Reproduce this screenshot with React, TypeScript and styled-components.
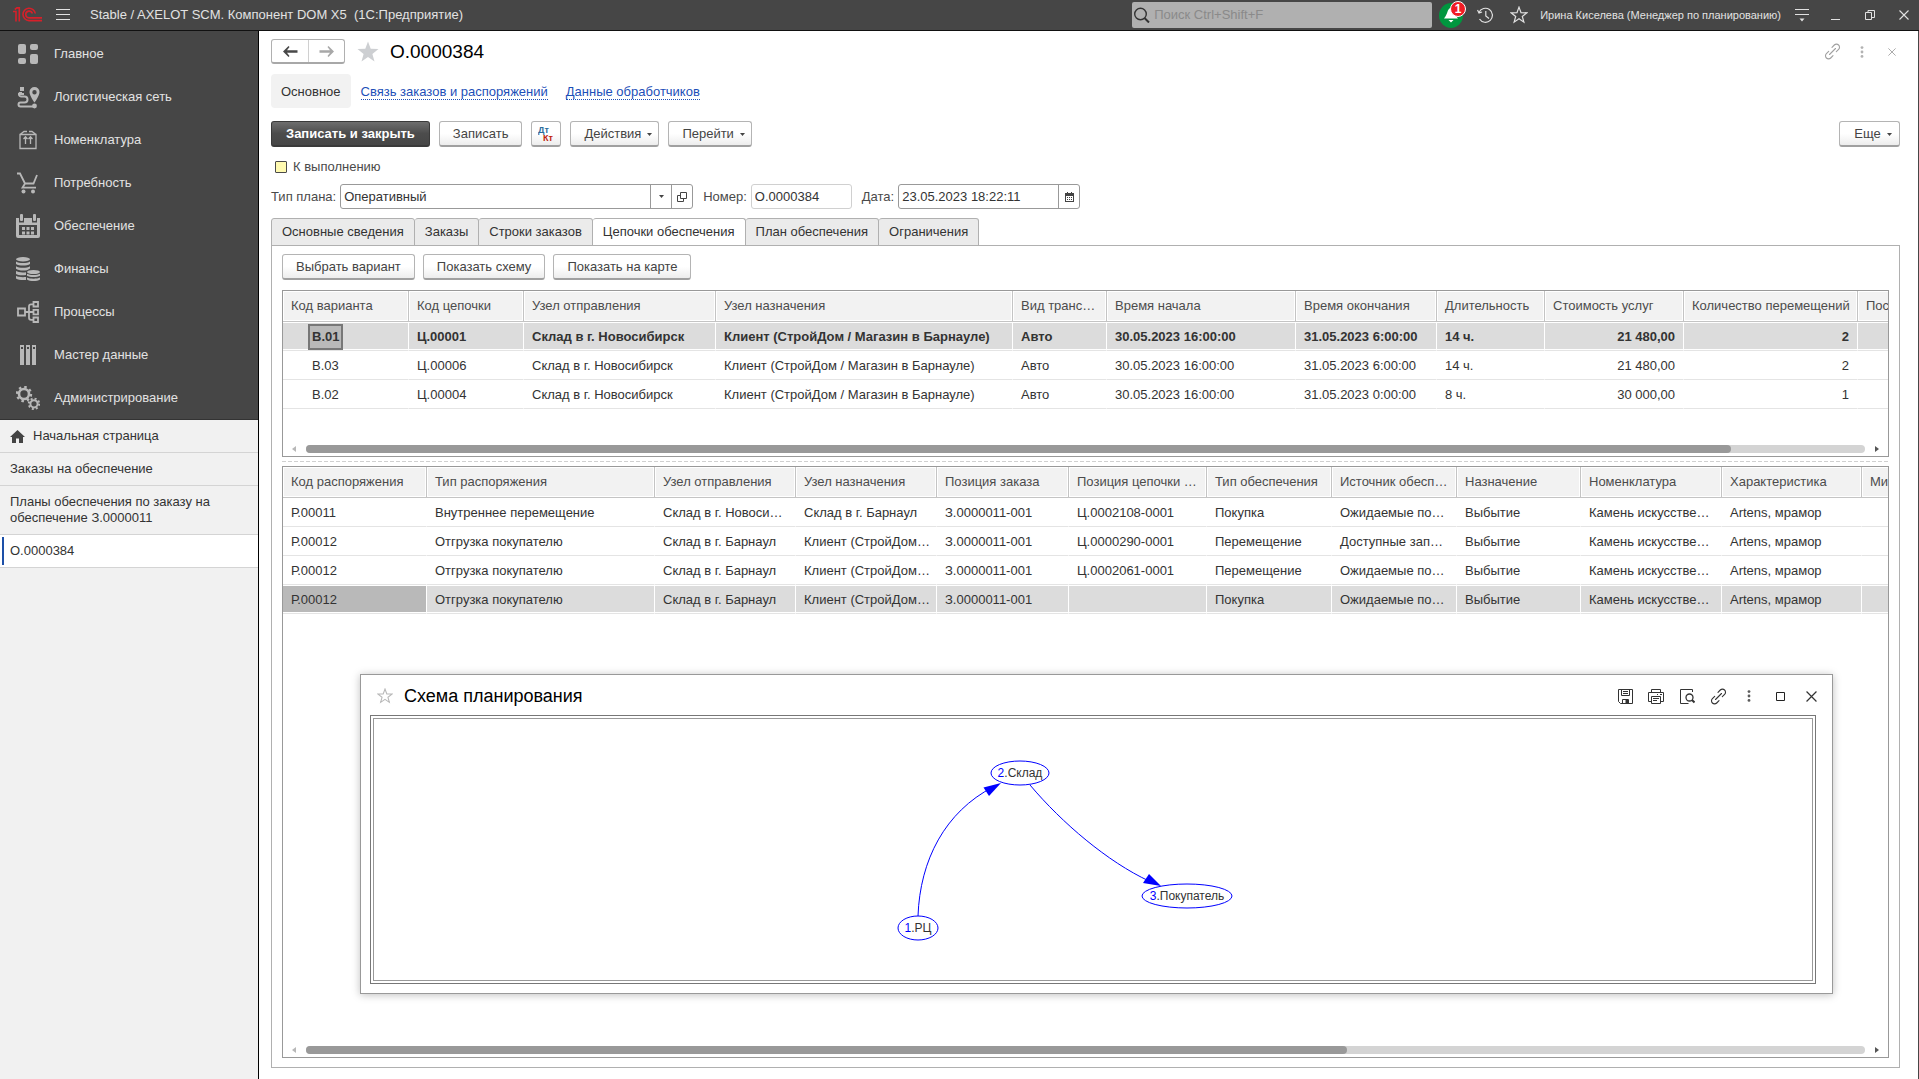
import React from "react";
import styled, { createGlobalStyle, css } from "styled-components";

const Global = createGlobalStyle`
  *, *::before, *::after { box-sizing: border-box; }
  body { margin: 0; background: #fff; }
  body, button, input, select, table {
    font-family: "Liberation Sans", Arial, sans-serif;
    font-size: 13px;
    line-height: 16px;
    color: #333;
  }
  button, input, select { margin: 0; padding: 0; border: 0; background: none; }
  button { cursor: pointer; }
  svg { display: block; flex: none; }
`;

const Shell = styled.div`
  display: flex;
  flex-direction: column;
  min-height: 100vh;
`;

/* ---------- top bar ---------- */

const TopBar = styled.header`
  display: flex;
  align-items: center;
  height: 31px;
  padding: 0 10px 0 12px;
  background: #464646;
  border-bottom: 1px solid #111;
  color: #e2e2e2;
`;
const AppTitle = styled.span`
  flex: 1;
  margin-left: 20px;
  white-space: pre;
`;
const TopButton = styled.button<{ $gap?: number }>`
  display: flex;
  align-items: center;
  justify-content: center;
  margin-left: ${(p) => p.$gap ?? 10}px;
  color: #e2e2e2;
`;
const Search = styled.label`
  display: flex;
  align-items: center;
  gap: 4px;
  width: 300px;
  height: 26px;
  padding: 0 2px;
  background: #b0b0b0;
  border-radius: 2px;
`;
const SearchInput = styled.input`
  flex: 1;
  min-width: 0;
  outline: none;
  &::placeholder { color: #8a8a8a; opacity: 1; }
`;
const Bell = styled.button`
  position: relative;
  display: flex;
  align-items: center;
  justify-content: center;
  width: 24px;
  height: 25px;
  margin-left: 7px;
  border-radius: 50%;
  background: #00963f;
`;
const Badge = styled.span`
  position: absolute;
  top: -2px;
  right: -3px;
  width: 16px;
  height: 16px;
  border: 1px solid #fff;
  border-radius: 50%;
  background: #f01c24;
  color: #fff;
  font-size: 12px;
  font-weight: bold;
  line-height: 14px;
  text-align: center;
`;
const UserName = styled.span`
  margin: 0 14px 0 12px;
  font-size: 11px;
  white-space: nowrap;
`;

/* ---------- sidebar ---------- */

const Body = styled.div`
  display: flex;
  flex: 1;
`;
const Sidebar = styled.aside`
  width: 259px;
  flex: none;
  background: #f1f1f1;
  border-right: 1px solid #000;
`;
const Sections = styled.nav`
  padding-top: 1px;
  background: #464646;
  border-bottom: 1px solid #333;
`;
const Section = styled.button`
  display: flex;
  align-items: center;
  gap: 14px;
  width: 100%;
  height: 43px;
  padding-left: 16px;
  color: #e2e2e2;
  text-align: left;
  svg { color: #b8b8b8; }
`;
const OpenWindow = styled.button<{ $active?: boolean }>`
  display: flex;
  align-items: center;
  gap: 8px;
  width: 100%;
  padding: 8px 40px 8px 10px;
  border-bottom: 1px solid #d4d4d4;
  text-align: left;
  ${(p) =>
    p.$active &&
    css`
      padding: 2px 2px;
      gap: 6px;
      background: #fff;
      &::before {
        content: "";
        width: 2px;
        height: 28px;
        background: #1d50a8;
      }
    `}
`;

/* ---------- form ---------- */

const Main = styled.main`
  display: flex;
  flex: 1;
  flex-direction: column;
  min-width: 0;
  padding: 8px 18px 11px 12px;
  border-right: 1px solid #464646;
`;
const TitleRow = styled.div`
  display: flex;
  align-items: center;
  height: 25px;
`;
const History = styled.div`
  display: flex;
  height: 25px;
  border: 1px solid #b0b0b0;
  border-bottom: 2px solid #a8a8a8;
  border-radius: 3px;
`;
const HistoryButton = styled.button`
  display: flex;
  align-items: center;
  justify-content: center;
  width: 36px;
  & + & { border-left: 1px solid #d0d0d0; }
`;
const StarButton = styled.button`
  margin: 0 10px 0 11px;
`;
const Title = styled.h1`
  flex: 1;
  margin: 0;
  font-size: 19px;
  line-height: 24px;
  font-weight: normal;
  color: #000;
`;
const FormTools = styled.div`
  display: flex;
  gap: 10px;
  margin-right: -2px;
`;
const FormTool = styled.button`
  display: flex;
  align-items: center;
  justify-content: center;
  width: 20px;
  height: 20px;
  color: #a0a0a0;
`;
const FormLinks = styled.nav`
  display: flex;
  align-items: center;
  height: 34px;
  margin-top: 10px;
`;
const CurrentLink = styled.span`
  display: flex;
  align-items: center;
  height: 34px;
  padding: 1px 10px 0;
  margin-right: 10px;
  border-radius: 4px;
  background: #f2f2f2;
`;
const FormLink = styled.a`
  margin: 2px 18px 0 0;
  border-bottom: 1px dotted #1d4fb8;
  color: #1d4fb8;
  line-height: 14px;
  text-decoration: none;
`;
const Toolbar = styled.div`
  display: flex;
  gap: 9px;
  margin-top: 13px;
`;
const Button = styled.button<{ $primary?: boolean; $tight?: boolean }>`
  display: flex;
  align-items: center;
  justify-content: center;
  gap: 6px;
  height: 26px;
  padding: 1px ${(p) => (p.$tight ? 6 : 13)}px 0;
  border: 1px solid #b4b4b4;
  border-bottom: 2px solid #a0a0a0;
  border-radius: 3px;
  background: linear-gradient(#fff 50%, #ededed);
  color: #444;
  white-space: nowrap;
  ${(p) =>
    p.$primary &&
    css`
      padding: 1px 14px 0;
      border-color: #3a3a3a;
      background: linear-gradient(#6e6e6e, #4c4c4c 50%, #464646);
      color: #fff;
      font-weight: bold;
    `}
`;
const MenuButton = styled(Button)`
  min-width: 61px;
  padding-right: 6px;
`;
const Spacer = styled.div`
  flex: 1;
`;
const CheckRow = styled.label`
  display: flex;
  align-items: center;
  gap: 6px;
  height: 16px;
  margin-top: 12px;
  padding-left: 4px;
  color: #4a4a4a;
`;
const Checkbox = styled.input`
  appearance: none;
  width: 12px;
  height: 12px;
  border: 1px solid #4a4a4a;
  border-radius: 1px;
  background: #fffab0;
`;
const Fields = styled.div`
  display: flex;
  align-items: center;
  margin-top: 9px;
`;
const FieldLabel = styled.label`
  margin-right: 4px;
  color: #4a4a4a;
`;
const FieldBox = styled.div<{ $width: number; $readOnly?: boolean }>`
  display: flex;
  width: ${(p) => p.$width}px;
  height: 25px;
  margin-right: 10px;
  border: 1px solid ${(p) => (p.$readOnly ? "#d0d0d0" : "#999")};
  border-radius: 3px;
  input, select {
    flex: 1;
    min-width: 0;
    padding: 0 3px;
    appearance: none;
    outline: none;
  }
`;
const FieldButton = styled.button`
  display: flex;
  align-items: center;
  justify-content: center;
  width: 21px;
  border-left: 1px solid #999;
  color: #444;
`;

/* ---------- tabs ---------- */

const Tabs = styled.div`
  display: flex;
  margin-top: 9px;
`;
const Tab = styled.button<{ $active?: boolean }>`
  height: 28px;
  padding: 0 10px;
  margin-bottom: -1px;
  border: 1px solid #b0b0b0;
  border-left-width: 0;
  border-radius: 3px 3px 0 0;
  background: #ebebeb;
  &:first-child { border-left-width: 1px; }
  ${(p) =>
    p.$active &&
    css`
      background: #fff;
      border-bottom-color: #fff;
    `}
`;
const Panel = styled.section`
  display: flex;
  flex: 1;
  flex-direction: column;
  padding: 8px 10px 9px;
  border: 1px solid #b0b0b0;
`;
const PanelButtons = styled.div`
  display: flex;
  gap: 8px;
  margin-bottom: 10px;
`;
const Splitter = styled.div`
  height: 1px;
  margin: 4px 0;
  background: repeating-linear-gradient(90deg, #d0d0d0 0 4px, #fff 4px 6px);
`;

/* ---------- tables ---------- */

const GridFrame = styled.div<{ $fill?: boolean }>`
  display: flex;
  flex-direction: column;
  border: 1px solid #999;
  ${(p) => (p.$fill ? "flex: 1;" : "min-height: 167px;")}
`;
const GridView = styled.div`
  flex: 1;
  overflow: hidden;
  contain: inline-size;
`;
const Table = styled.table`
  table-layout: fixed;
  width: 0;
  border-collapse: separate;
  border-spacing: 0;
`;
const Th = styled.th`
  height: 31px;
  padding: 0 2px 0 8px;
  border-right: 1px solid #c4c4c4;
  border-bottom: 1px solid #c4c4c4;
  background: #f2f2f2;
  box-shadow: inset 0 0 0 1px #fff;
  color: #4c4c4c;
  font-weight: normal;
  text-align: left;
  white-space: nowrap;
`;
const Row = styled.tr<{ $selected?: boolean; $bold?: boolean }>`
  font-weight: ${(p) => (p.$bold ? "bold" : "normal")};
  ${(p) =>
    p.$selected &&
    css`
      td {
        border-right: 1px solid #fff;
        background: #dcdcdc;
        box-shadow: inset 0 1px #fff, inset 0 -1px #fff;
      }
    `}
`;
const Td = styled.td<{ $right?: boolean; $current?: boolean }>`
  height: 29px;
  padding: 1px ${(p) => (p.$right ? 8 : 2)}px 0 8px;
  border-right: 1px solid transparent;
  border-bottom: 1px solid #e4e4e4;
  text-align: ${(p) => (p.$right ? "right" : "left")};
  white-space: nowrap;
  tr &&& { ${(p) => p.$current && "background: #b9b9b9;"} }
`;
const TreeCell = styled.span<{ $focus?: boolean }>`
  display: inline-block;
  height: 26px;
  margin-left: 17px;
  padding: 0 2px;
  border: 2px solid ${(p) => (p.$focus ? "#777" : "transparent")};
  background: ${(p) => (p.$focus ? "#b9b9b9" : "none")};
  line-height: 22px;
  vertical-align: middle;
`;
const ScrollRow = styled.div`
  display: flex;
  align-items: center;
  justify-content: space-between;
  gap: 10px;
  height: 8px;
  margin: 0 9px 3px;
  color: #555;
`;
const Track = styled.div`
  flex: 1;
  height: 8px;
  border-radius: 4px;
  background: #d4d4d4;
`;
const Thumb = styled.div<{ $share: number }>`
  width: ${(p) => p.$share}%;
  height: 8px;
  border-radius: 4px;
  background: #999;
`;

/* ---------- scheme window ---------- */

const SchemeWindow = styled.section`
  position: absolute;
  left: 360px;
  right: 86px;
  top: 674px;
  display: flex;
  flex-direction: column;
  height: 320px;
  padding: 0 16px 9px 9px;
  border: 1px solid #999;
  background: #fff;
  box-shadow: 0 1px 8px rgba(0, 0, 0, 0.25);
`;
const SchemeHead = styled.div`
  display: flex;
  align-items: center;
  gap: 11px;
  height: 40px;
  padding: 2px 0 0 7px;
`;
const SchemeTitle = styled.h2`
  flex: 1;
  margin: 0;
  font-size: 18px;
  line-height: 24px;
  font-weight: normal;
  color: #000;
`;
const SchemeTools = styled.div`
  display: flex;
  gap: 13px;
  margin-right: -4px;
`;
const IconButton = styled.button`
  display: flex;
  align-items: center;
  justify-content: center;
  width: 18px;
  height: 18px;
`;
const Canvas = styled.div`
  flex: 1;
  padding: 2px;
  border: 1px solid #777;
`;
const CanvasInner = styled.div`
  height: 100%;
  border: 1px solid #999;
`;
const Diagram = styled.svg`
  width: 100%;
  height: 100%;
  font-family: "Liberation Sans", Arial, sans-serif;
  font-size: 12px;
`;

/* ---------- icons ---------- */

const Caret = () => (
  <svg width="5" height="3" viewBox="0 0 5 3"><path d="M0 0h5L2.500 3z" fill="currentColor" /></svg>
);
const ScrollArrow = ({ left }: { left?: boolean }) => (
  <svg width="4" height="6" viewBox="0 0 4 6">
    <path d={left ? "M4 0v6L0 3z" : "M0 0v6l4-3z"} fill={left ? "#b8b8b8" : "currentColor"} />
  </svg>
);
const Logo = () => (
  <svg width="31" height="16" viewBox="0 0 31 16" fill="none" stroke="#d6202a" strokeWidth="1.600">
    <path d="M1 4.500H4V14.500M2.800 2.500L5 .9H7.300V14.500" />
    <path d="M23.300 6.500A6.200 6.200 0 1 0 17 13.600H30" />
    <path d="M20.400 6.500A3.400 3.400 0 1 0 17 10.900H30" />
  </svg>
);
const Link = () => (
  <svg width="17" height="17" viewBox="0 0 17 17" fill="none" stroke="currentColor" strokeWidth="1.100" strokeLinecap="round">
    <path d="M5.500 11.500l6-6" />
    <path d="M8 4.300l2.300-2.300a3 3 0 0 1 4.300 0 3 3 0 0 1 0 4.300L12.300 8.600" />
    <path d="M4.700 8.400L2.400 10.700a3 3 0 0 0 0 4.300 3 3 0 0 0 4.300 0L9 12.700" />
  </svg>
);
const Dots = () => (
  <svg width="4" height="12" viewBox="0 0 4 12" fill="currentColor" opacity="0.800">
    <circle cx="2" cy="1.600" r="1.400" /><circle cx="2" cy="6" r="1.400" /><circle cx="2" cy="10.400" r="1.400" />
  </svg>
);
const Cross = ({ size = 10 }: { size?: number }) => (
  <svg width={size} height={size} viewBox="0 0 10 10" stroke="currentColor" strokeWidth="1.100"><path d="M.5.5l9 9M9.500.5l-9 9" /></svg>
);
const Star = ({ size, fill, stroke }: { size: number; fill: string; stroke: string }) => (
  <svg width={size} height={size} viewBox="0 0 24 24" fill={fill} stroke={stroke} strokeWidth="1.600">
    <path d="M12 1.500l2.700 7.300 7.800.3-6.100 4.800 2.100 7.600-6.500-4.400-6.500 4.400 2.100-7.600L1.500 9.100l7.800-.3z" />
  </svg>
);
const Arrow = ({ back }: { back?: boolean }) => (
  <svg width="15" height="11" viewBox="0 0 15 11" fill={back ? "#484848" : "#a8a8a8"}>
    <path d={back ? "M0 5.500L5.500 0l1 1L4 4.300h10.500v2.400H4L6.500 10l-1 1z" : "M15 5.500L9.500 0l-1 1L11 4.300H.5v2.400H11L8.500 10l1 1z"} />
  </svg>
);

const sectionIcons: Record<string, React.ReactNode> = {
  main: (
    <g fill="currentColor">
      <rect x="2" y="2" width="8" height="10" rx="2" /><rect x="14" y="2" width="8" height="6" rx="2" />
      <rect x="2" y="16" width="8" height="6" rx="2" /><rect x="14" y="12" width="8" height="10" rx="2" />
    </g>
  ),
  network: (
    <g fill="none" stroke="currentColor" strokeWidth="2">
      <path d="M6 8H3.500M4 7.500C2 9 3 11.500 5 11.500h3.500a3 3 0 0 1 0 6H4.500a2 2 0 0 0 0 4H17" />
      <rect x="4" y="2" width="4" height="4" fill="currentColor" stroke="none" /><path d="M2 9h6" />
      <circle cx="18.500" cy="21" r="2.400" fill="currentColor" stroke="none" />
      <path fillRule="evenodd" fill="currentColor" stroke="none" d="M18.500 2a5 5 0 0 0-5 5c0 4 5 10.500 5 10.500s5-6.500 5-10.500a5 5 0 0 0-5-5zm0 3a2.200 2.200 0 1 1 0 4.400 2.200 2.200 0 0 1 0-4.400z" />
    </g>
  ),
  goods: (
    <g fill="none" stroke="currentColor" strokeWidth="1.300">
      <path d="M4 6.500h16v14H4zM4 6.500l4-3h3M20 6.500l-4-3h-3M9.500 16V9M14.500 16V9M7.500 11l2-2.200 2 2.200M12.500 11l2-2.200 2 2.200" />
    </g>
  ),
  cart: (
    <g fill="none" stroke="currentColor" strokeWidth="1.800">
      <path d="M1 2.500h3l5 10h8.500L21 4M9 12.500l-2.500 4.200H20" />
      <circle cx="7.500" cy="20.500" r="2" fill="currentColor" stroke="none" /><circle cx="17" cy="20.500" r="2" fill="currentColor" stroke="none" />
    </g>
  ),
  supply: (
    <g fill="currentColor">
      <path fillRule="evenodd" d="M0 4h3v4.500h5V4h8v4.500h5V4h3v18a2 2 0 0 1-2 2H2a2 2 0 0 1-2-2zm3 7v10h18V11z" />
      <rect x="4" y="0" width="3" height="7" rx="1" /><rect x="17" y="0" width="3" height="7" rx="1" />
      <path d="M6 13h3v3H6zM10.500 13h3v3h-3zM15 13h3v3h-3zM6 17.500h3v3H6zM10.500 17.500h3v3h-3zM15 17.500h3v3h-3z" />
    </g>
  ),
  finance: (
    <g fill="currentColor">
      <ellipse cx="7" cy="2.200" rx="7" ry="2.200" />
      <path d="M0 4.500c3 2 11 2 14 0v2.500c-3 2-11 2-14 0zM0 9.300c3 2 11 2 14 0v2.200l-3 1.700c-4 .8-9 .3-11-1.400zM0 14c2 1.300 6 1.700 10 1.200V18c-4 .7-8 .3-10-1zM0 18.700c2 1.300 6 1.700 10 1.300V23c-4 .3-8 0-10-1.500z" />
      <ellipse cx="17.500" cy="15" rx="6.500" ry="2" />
      <path d="M11 16.800c3 1.600 10 1.600 13 0v2c-3 1.600-10 1.600-13 0zM11 20.500c3 1.600 10 1.600 13 0v2c-3 2-10 2-13 0z" />
    </g>
  ),
  process: (
    <g fill="none" stroke="currentColor" strokeWidth="1.800">
      <path d="M2 8.500h7v7H2zM17.500 2h4.500v4.500h-4.500zM17.500 9.800h4.500v4.500h-4.500zM17.500 17.500h4.500V22h-4.500zM9 12h8.500M17.500 4.300H15q-2 0-2 2v11.500q0 2 2 2h2.500" />
    </g>
  ),
  master: (
    <path fill="currentColor" fillRule="evenodd" d="M4 2h4v20H4zm1 2v2h2V4zM10 2h4v20h-4zm1 2v2h2V4zM16 2h4v20h-4zm1 2v2h2V4z" />
  ),
  admin: (
    <g fill="none" stroke="currentColor">
      <circle cx="8" cy="8" r="5" strokeWidth="2.600" />
      <circle cx="8" cy="8" r="7" strokeWidth="2.400" strokeDasharray="2.500 3" />
      <circle cx="18" cy="17.800" r="3.600" strokeWidth="2" />
      <circle cx="18" cy="17.800" r="5.200" strokeWidth="2" strokeDasharray="2 2.080" />
    </g>
  ),
};

const sections = [
  ["main", "Главное"],
  ["network", "Логистическая сеть"],
  ["goods", "Номенклатура"],
  ["cart", "Потребность"],
  ["supply", "Обеспечение"],
  ["finance", "Финансы"],
  ["process", "Процессы"],
  ["master", "Мастер данные"],
  ["admin", "Администрирование"],
];

/* ---------- data ---------- */

type Column = { title: string; width: number; right?: boolean };

const variantColumns: Column[] = [
  { title: "Код варианта", width: 126 },
  { title: "Код цепочки", width: 115 },
  { title: "Узел отправления", width: 192 },
  { title: "Узел назначения", width: 297 },
  { title: "Вид транс…", width: 94 },
  { title: "Время начала", width: 189 },
  { title: "Время окончания", width: 141 },
  { title: "Длительность", width: 108 },
  { title: "Стоимость услуг", width: 139, right: true },
  { title: "Количество перемещений", width: 174, right: true },
  { title: "Поставщик", width: 140 },
];
const variantRows = [
  ["В.01", "Ц.00001", "Склад в г. Новосибирск", "Клиент (СтройДом / Магазин в Барнауле)", "Авто", "30.05.2023 16:00:00", "31.05.2023 6:00:00", "14 ч.", "21 480,00", "2", ""],
  ["В.03", "Ц.00006", "Склад в г. Новосибирск", "Клиент (СтройДом / Магазин в Барнауле)", "Авто", "30.05.2023 16:00:00", "31.05.2023 6:00:00", "14 ч.", "21 480,00", "2", ""],
  ["В.02", "Ц.00004", "Склад в г. Новосибирск", "Клиент (СтройДом / Магазин в Барнауле)", "Авто", "30.05.2023 16:00:00", "31.05.2023 0:00:00", "8 ч.", "30 000,00", "1", ""],
];

const orderColumns: Column[] = [
  { title: "Код распоряжения", width: 144 },
  { title: "Тип распоряжения", width: 228 },
  { title: "Узел отправления", width: 141 },
  { title: "Узел назначения", width: 141 },
  { title: "Позиция заказа", width: 132 },
  { title: "Позиция цепочки …", width: 138 },
  { title: "Тип обеспечения", width: 125 },
  { title: "Источник обесп…", width: 125 },
  { title: "Назначение", width: 124 },
  { title: "Номенклатура", width: 141 },
  { title: "Характеристика", width: 140 },
  { title: "Минимум", width: 140 },
];
const orderRows = [
  ["Р.00011", "Внутреннее перемещение", "Склад в г. Новоси…", "Склад в г. Барнаул", "З.0000011-001", "Ц.0002108-0001", "Покупка", "Ожидаемые по…", "Выбытие", "Камень искусстве…", "Artens, мрамор", ""],
  ["Р.00012", "Отгрузка покупателю", "Склад в г. Барнаул", "Клиент (СтройДом…", "З.0000011-001", "Ц.0000290-0001", "Перемещение", "Доступные зап…", "Выбытие", "Камень искусстве…", "Artens, мрамор", ""],
  ["Р.00012", "Отгрузка покупателю", "Склад в г. Барнаул", "Клиент (СтройДом…", "З.0000011-001", "Ц.0002061-0001", "Перемещение", "Ожидаемые по…", "Выбытие", "Камень искусстве…", "Artens, мрамор", ""],
  ["Р.00012", "Отгрузка покупателю", "Склад в г. Барнаул", "Клиент (СтройДом…", "З.0000011-001", "", "Покупка", "Ожидаемые по…", "Выбытие", "Камень искусстве…", "Artens, мрамор", ""],
];

type GridProps = {
  columns: Column[];
  rows: string[][];
  selected: number;
  share: number;
  tree?: boolean;
  fill?: boolean;
};

const Grid = ({ columns, rows, selected, share, tree, fill }: GridProps) => (
  <GridFrame $fill={fill}>
    <GridView>
      <Table>
        <colgroup>
          {columns.map((c) => <col key={c.title} style={{ width: c.width }} />)}
        </colgroup>
        <thead>
          <tr>{columns.map((c) => <Th key={c.title}>{c.title}</Th>)}</tr>
        </thead>
        <tbody>
          {rows.map((r, i) => (
            <Row key={i} $selected={i === selected} $bold={tree && i === selected}>
              {r.map((v, j) => (
                <Td key={j} $right={columns[j].right} $current={!tree && i === selected && j === 0}>
                  {tree && j === 0 ? <TreeCell $focus={i === selected}>{v}</TreeCell> : v}
                </Td>
              ))}
            </Row>
          ))}
        </tbody>
      </Table>
    </GridView>
    <ScrollRow>
      <ScrollArrow left />
      <Track><Thumb $share={share} /></Track>
      <ScrollArrow />
    </ScrollRow>
  </GridFrame>
);

const nodes = [
  { n: "1", name: "РЦ", x: 544, y: 209, rx: 20 },
  { n: "2", name: "Склад", x: 646, y: 54, rx: 29 },
  { n: "3", name: "Покупатель", x: 813, y: 177, rx: 45 },
];

const Scheme = () => (
  <Diagram>
    <g fill="none" stroke="#00f">
      <path d="M544 197C546 141 571 93 619 68" />
      <path d="M656 66C688 104 734 143 775 162" />
    </g>
    <g fill="#00f">
      <path d="M627 64l-17.500 4.500 5.500 8.500z" />
      <path d="M787 167l-12-12-6 9z" />
    </g>
    {nodes.map((d) => (
      <g key={d.n}>
        <ellipse cx={d.x} cy={d.y} rx={d.rx} ry="12" fill="#fff" stroke="#00f" />
        <text x={d.x} y={d.y + 4} textAnchor="middle" fill="#333">
          <tspan fill="#00f">{d.n}</tspan>.{d.name}
        </text>
      </g>
    ))}
  </Diagram>
);

export default function App() {
  return (
    <Shell>
      <Global />
      <TopBar>
        <Logo />
        <TopButton $gap={13} aria-label="Меню">
          <svg width="14" height="12" viewBox="0 0 14 12" stroke="currentColor"><path d="M0 .5h14M0 5.500h14M0 10.500h14" /></svg>
        </TopButton>
        <AppTitle>{"Stable / AXELOT SCM. Компонент DOM X5  (1С:Предприятие)"}</AppTitle>
        <Search>
          <svg width="16" height="16" viewBox="0 0 16 16" fill="none" stroke="#333" strokeWidth="1.400">
            <circle cx="6.500" cy="7" r="5.800" /><path d="M10.500 11l4.500 4.500" strokeWidth="2" />
          </svg>
          <SearchInput placeholder="Поиск Ctrl+Shift+F" aria-label="Поиск" />
        </Search>
        <Bell aria-label="Оповещения">
          <svg width="16" height="16" viewBox="0 0 16 16" fill="#fff"><path d="M7.500 1C4 2 5 7 1 11.500h14C11 7 11 2 7.500 1zM5.500 13h5L8 15.500z" /></svg>
          <Badge>1</Badge>
        </Bell>
        <TopButton $gap={14} aria-label="История">
          <svg width="17" height="17" viewBox="0 0 17 17" fill="none" stroke="currentColor" strokeWidth="1.200">
            <path d="M2 5.500A7 7 0 1 1 2.500 12M.5 3L2 6l3-1M8.800 4v5l3.200 2.500" />
          </svg>
        </TopButton>
        <TopButton $gap={16} aria-label="Избранное"><Star size={18} fill="none" stroke="currentColor" /></TopButton>
        <UserName>Ирина Киселева (Менеджер по планированию)</UserName>
        <TopButton $gap={0} aria-label="Настройки">
          <svg width="14" height="14" viewBox="0 0 14 14" stroke="currentColor"><path d="M0 1.500h14M0 6.500h14" /><path d="M4.500 10.500h5L7 13.500z" fill="currentColor" stroke="none" /></svg>
        </TopButton>
        <TopButton $gap={22} aria-label="Свернуть">
          <svg width="9" height="12" viewBox="0 0 9 12" stroke="currentColor"><path d="M0 10.500h9" /></svg>
        </TopButton>
        <TopButton $gap={25} aria-label="Восстановить">
          <svg width="10" height="10" viewBox="0 0 10 10" fill="none" stroke="currentColor"><path d="M.5 2.500h6v7h-6zM3 2.500v-2h6.500v7h-3" /></svg>
        </TopButton>
        <TopButton $gap={24} aria-label="Закрыть приложение"><Cross size={10} /></TopButton>
      </TopBar>

      <Body>
        <Sidebar>
          <Sections>
            {sections.map(([id, name]) => (
              <Section key={id}>
                <svg width="24" height="24" viewBox="0 0 24 24">{sectionIcons[id]}</svg>
                {name}
              </Section>
            ))}
          </Sections>
          <OpenWindow>
            <svg width="15" height="13" viewBox="0 0 15 13" fill="#444"><path d="M7.500 0L15 7h-2v6H9V8.500H6V13H2V7H0z" /></svg>
            Начальная страница
          </OpenWindow>
          <OpenWindow>Заказы на обеспечение</OpenWindow>
          <OpenWindow>Планы обеспечения по заказу на обеспечение З.0000011</OpenWindow>
          <OpenWindow $active>О.0000384</OpenWindow>
        </Sidebar>

        <Main>
          <TitleRow>
            <History>
              <HistoryButton aria-label="Назад"><Arrow back /></HistoryButton>
              <HistoryButton aria-label="Вперед"><Arrow /></HistoryButton>
            </History>
            <StarButton aria-label="В избранное"><Star size={24} fill="#cdcfd2" stroke="none" /></StarButton>
            <Title>О.0000384</Title>
            <FormTools>
              <FormTool aria-label="Получить ссылку"><Link /></FormTool>
              <FormTool aria-label="Еще действия"><Dots /></FormTool>
              <FormTool aria-label="Закрыть"><Cross size={8} /></FormTool>
            </FormTools>
          </TitleRow>

          <FormLinks>
            <CurrentLink>Основное</CurrentLink>
            <FormLink href="#links">Связь заказов и распоряжений</FormLink>
            <FormLink href="#handlers">Данные обработчиков</FormLink>
          </FormLinks>

          <Toolbar>
            <Button $primary>Записать и закрыть</Button>
            <Button>Записать</Button>
            <Button $tight aria-label="Движения документа">
              <svg width="16" height="18" viewBox="0 0 16 18" fontFamily="Liberation Sans, Arial, sans-serif" fontSize="9" fontWeight="bold">
                <text x="0" y="8" fill="#2c6c9c">Дт</text><text x="5" y="16" fill="#c0200c">Кт</text>
              </svg>
            </Button>
            <MenuButton>Действия <Caret /></MenuButton>
            <MenuButton>Перейти <Caret /></MenuButton>
            <Spacer />
            <MenuButton>Еще <Caret /></MenuButton>
          </Toolbar>

          <CheckRow><Checkbox type="checkbox" />К выполнению</CheckRow>

          <Fields>
            <FieldLabel htmlFor="plan">Тип плана:</FieldLabel>
            <FieldBox $width={353}>
              <select id="plan"><option>Оперативный</option></select>
              <FieldButton aria-label="Выбрать"><Caret /></FieldButton>
              <FieldButton aria-label="Открыть">
                <svg width="10" height="10" viewBox="0 0 10 10" fill="none" stroke="currentColor"><path d="M3.500.5h6v6h-6zM3.500 3.500h-3v6h6v-3" /></svg>
              </FieldButton>
            </FieldBox>
            <FieldLabel htmlFor="number">Номер:</FieldLabel>
            <FieldBox $width={101} $readOnly><input id="number" readOnly value="О.0000384" /></FieldBox>
            <FieldLabel htmlFor="date">Дата:</FieldLabel>
            <FieldBox $width={182}>
              <input id="date" defaultValue="23.05.2023 18:22:11" />
              <FieldButton aria-label="Календарь">
                <svg width="9" height="10" viewBox="0 0 9 10" fill="currentColor">
                  <path fillRule="evenodd" d="M0 1h9v9H0zm1 3v5h7V4z" /><path d="M2 0h1v2H2zM6 0h1v2H6zM2 5h1v1H2zM4 5h1v1H4zM6 5h1v1H6zM2 7h1v1H2zM4 7h1v1H4zM6 7h1v1H6z" />
                </svg>
              </FieldButton>
            </FieldBox>
          </Fields>

          <Tabs role="tablist">
            <Tab role="tab">Основные сведения</Tab>
            <Tab role="tab">Заказы</Tab>
            <Tab role="tab">Строки заказов</Tab>
            <Tab role="tab" aria-selected $active>Цепочки обеспечения</Tab>
            <Tab role="tab">План обеспечения</Tab>
            <Tab role="tab">Ограничения</Tab>
          </Tabs>

          <Panel>
            <PanelButtons>
              <Button>Выбрать вариант</Button>
              <Button>Показать схему</Button>
              <Button>Показать на карте</Button>
            </PanelButtons>
            <Grid columns={variantColumns} rows={variantRows} selected={0} share={91.4} tree />
            <Splitter />
            <Grid columns={orderColumns} rows={orderRows} selected={3} share={66.8} fill />
          </Panel>
        </Main>
      </Body>

      <SchemeWindow>
        <SchemeHead>
          <Star size={16} fill="none" stroke="#b8b8b8" />
          <SchemeTitle>Схема планирования</SchemeTitle>
          <SchemeTools>
            <IconButton aria-label="Сохранить">
              <svg width="15" height="15" viewBox="0 0 15 15" fill="none" stroke="#333"><path d="M.5.5h14v14h-12l-2-2zM3.500.5v6h8v-6M5 2.500h5M5 4.500h5M4.500 14.500v-4h6v4" /><path d="M8 11h2v3H8z" fill="#333" /></svg>
            </IconButton>
            <IconButton aria-label="Печать">
              <svg width="16" height="15" viewBox="0 0 16 15" fill="none" stroke="#333"><path d="M3.500 3.500v-3h9v3M3.500 12.500h-3v-9h15v9h-3M3.500 7.500h9v7h-9zM5 9.500h6M5 11.500h4M9 5.500h1M12 5.500h2" /></svg>
            </IconButton>
            <IconButton aria-label="Просмотр">
              <svg width="15" height="15" viewBox="0 0 15 15" fill="none" stroke="#333"><path d="M12.500 3V.5H.5v14h8" /><circle cx="9.500" cy="8.500" r="3.500" strokeWidth="1.300" /><path d="M12 11l2.500 2.500" strokeWidth="2" /></svg>
            </IconButton>
            <IconButton aria-label="Получить ссылку"><Link /></IconButton>
            <IconButton aria-label="Еще действия"><Dots /></IconButton>
            <IconButton aria-label="Развернуть">
              <svg width="9" height="9" viewBox="0 0 9 9" fill="none" stroke="#222"><path d="M.5.5h8v8h-8z" /></svg>
            </IconButton>
            <IconButton aria-label="Закрыть"><Cross size={11} /></IconButton>
          </SchemeTools>
        </SchemeHead>
        <Canvas><CanvasInner><Scheme /></CanvasInner></Canvas>
      </SchemeWindow>
    </Shell>
  );
}
